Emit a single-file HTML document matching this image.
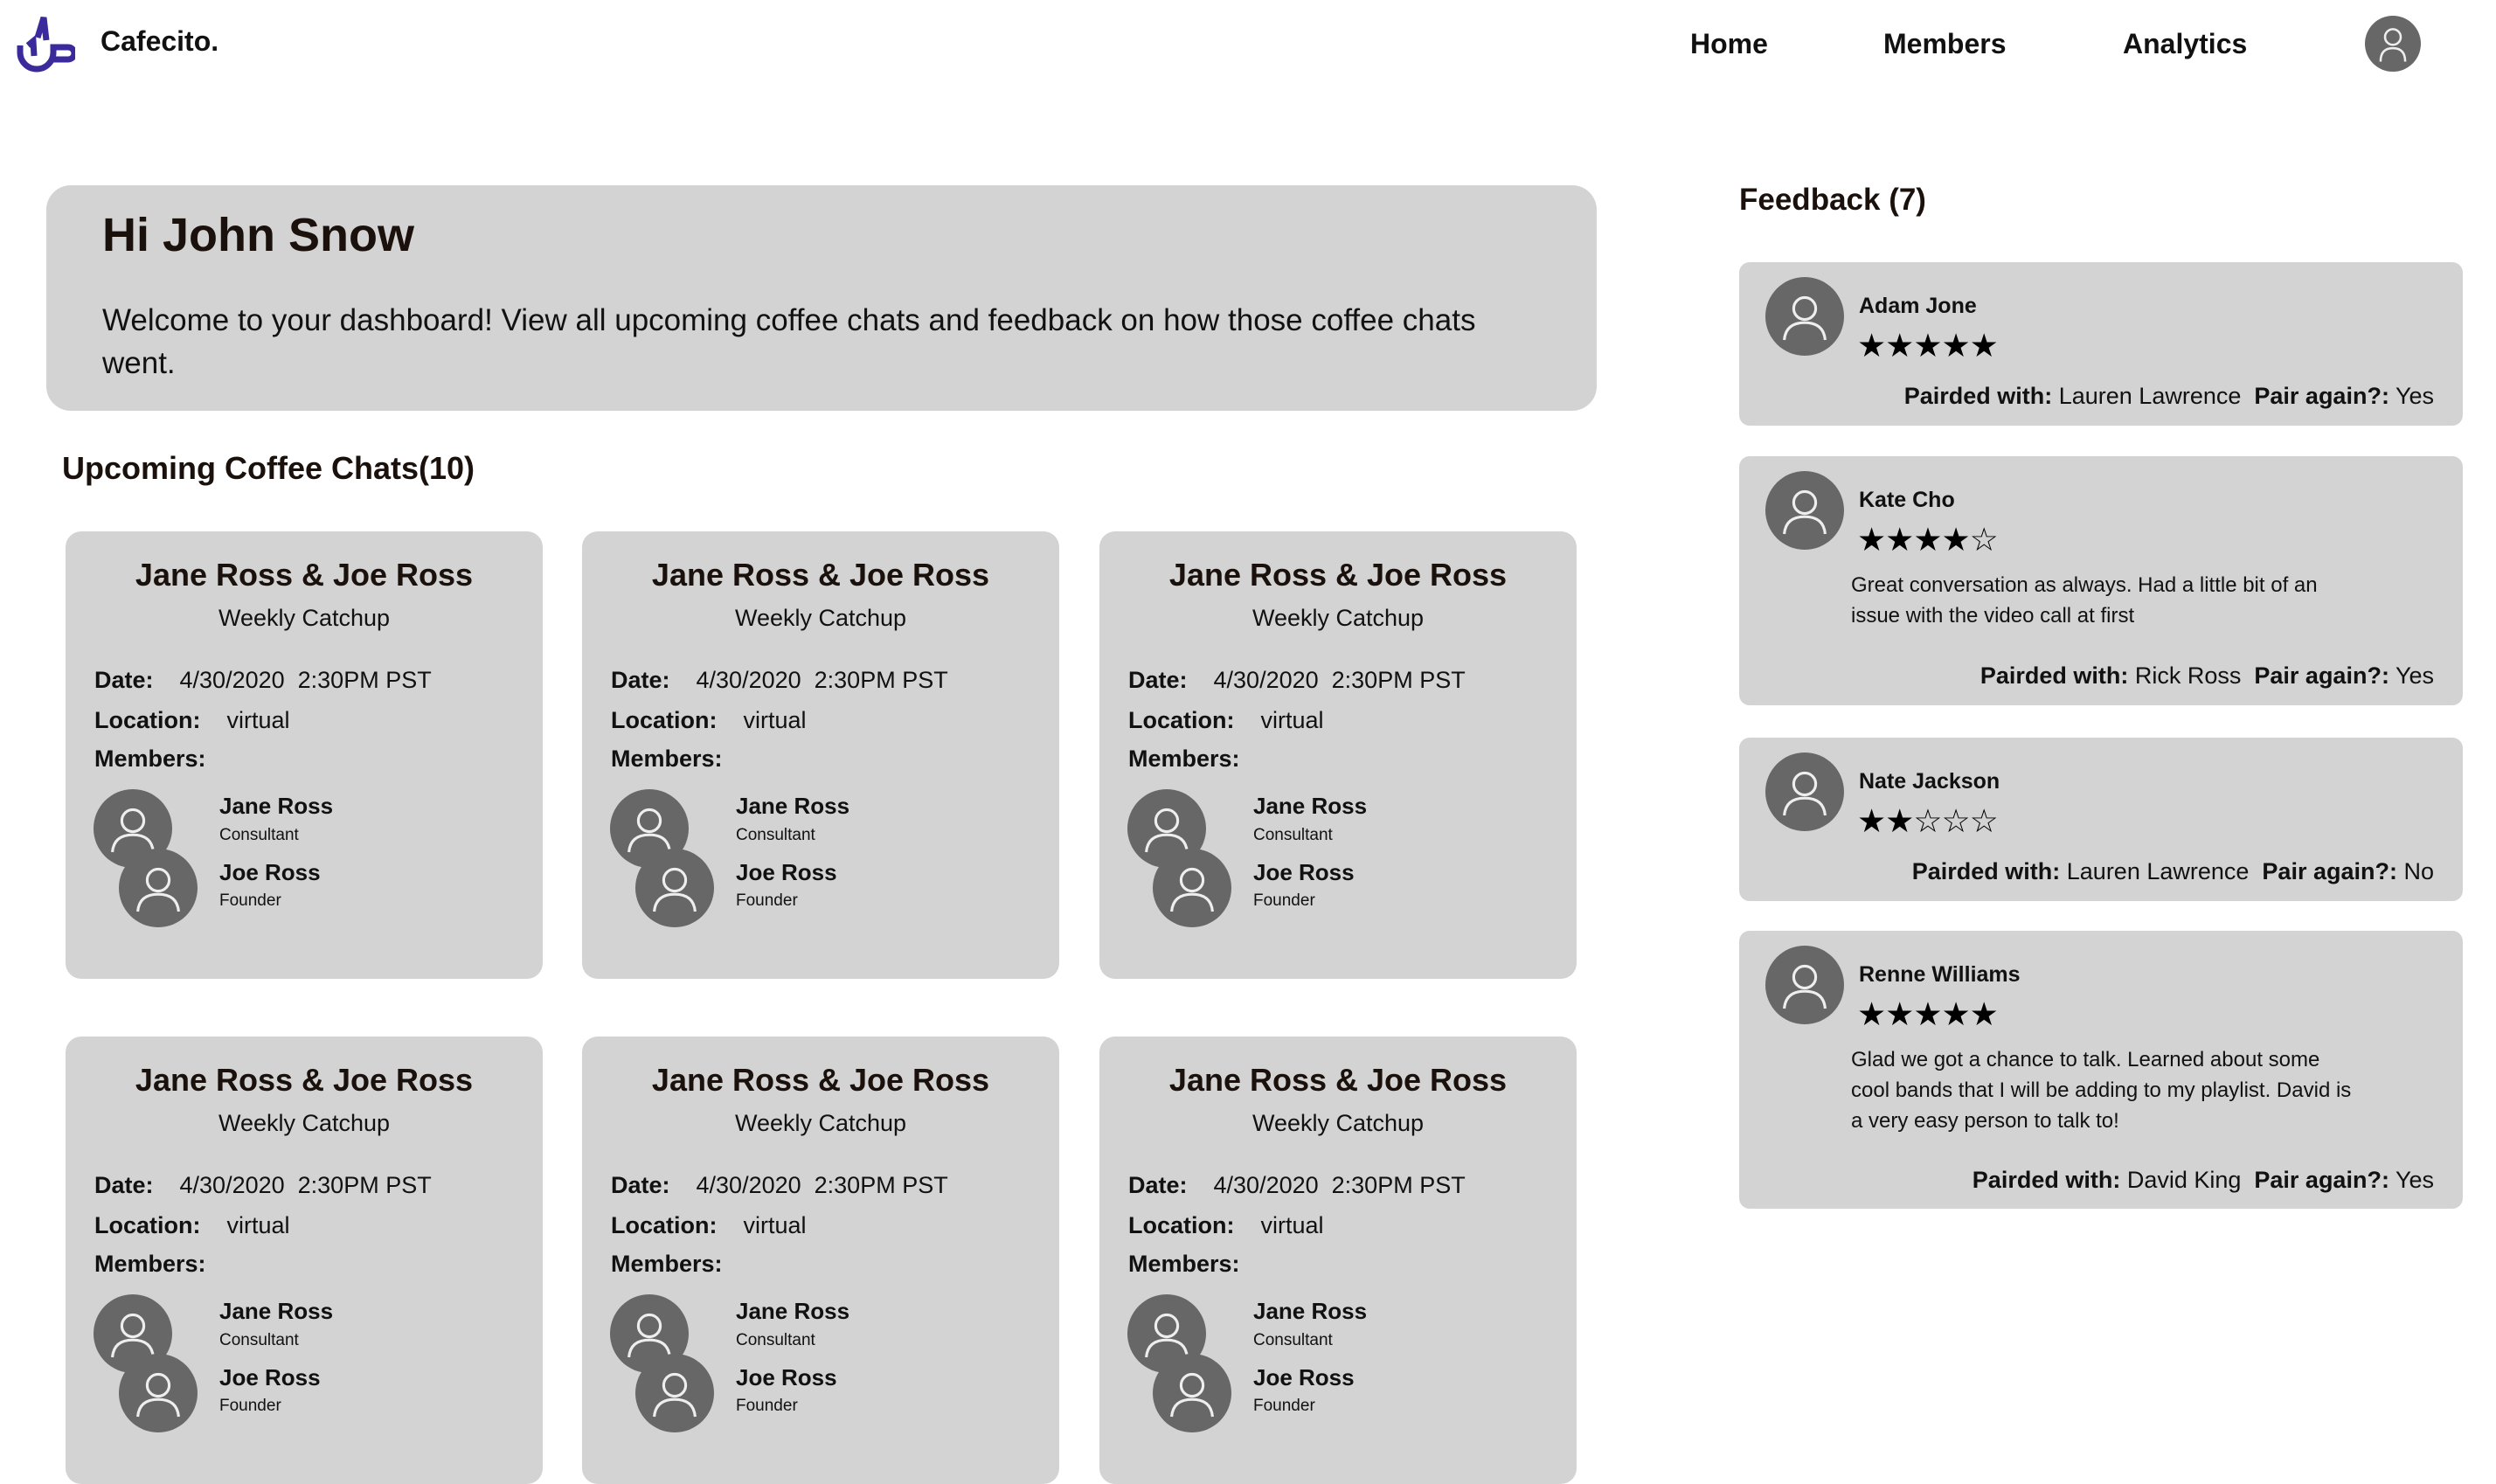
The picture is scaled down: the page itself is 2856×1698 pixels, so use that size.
<!DOCTYPE html>
<html><head><meta charset="utf-8"><style>
*{margin:0;padding:0;box-sizing:border-box}
html,body{width:2856px;height:1412px;overflow:hidden;background:#fff;font-family:"Liberation Sans",sans-serif;color:#111}
.a{position:absolute;white-space:nowrap}
.h{font-family:"Liberation Sans",sans-serif;font-weight:bold;color:#1a100c}
.card{position:absolute;background:#d3d3d3;border-radius:18px;width:546px;height:512px}
.card .t{position:absolute;left:0;width:100%;text-align:center}
.lbl{font-weight:bold}
.fb{position:absolute;left:1990px;width:828px;background:#d3d3d3;border-radius:12px}
.av{position:absolute}
.star{font-family:"DejaVu Sans",sans-serif;font-size:37px;letter-spacing:-1px;color:#000}
</style></head><body>
<svg class="a" style="left:16px;top:16px" width="70" height="70" viewBox="0 0 70 70">
<g fill="none" stroke="#3a2a9c" stroke-width="7" stroke-linejoin="miter">
<path d="M7 36 V44 A19 19 0 0 0 45 44 V38 H62 A7 7 0 0 1 62 52 H44"/>
<path d="M16 36 L22 31 L23 48"/>
<path d="M27 27 L34 4 L37 30"/>
</g></svg>
<div class="a" style="left:115px;top:29px;font-size:32px;font-weight:bold">Cafecito.</div>
<div class="a" style="left:1934px;top:32px;font-size:32px;font-weight:bold">Home</div>
<div class="a" style="left:2155px;top:32px;font-size:32px;font-weight:bold">Members</div>
<div class="a" style="left:2429px;top:32px;font-size:32px;font-weight:bold">Analytics</div>
<svg class="a" style="left:2706px;top:18px" width="64" height="64" viewBox="0 0 100 100"><circle cx="50" cy="50" r="50" fill="#676767"/><circle cx="50" cy="38" r="14" fill="none" stroke="#eee" stroke-width="4"/><path d="M28 82 Q28 58 50 58 Q72 58 72 82" fill="none" stroke="#eee" stroke-width="4"/></svg>

<div class="a" style="left:53px;top:212px;width:1774px;height:258px;background:#d3d3d3;border-radius:28px"></div>
<div class="a h" style="left:117px;top:238px;font-size:54px">Hi John Snow</div>
<div class="a" style="left:117px;top:342px;width:1640px;white-space:normal;font-size:35px;line-height:49px;color:#111">Welcome to your dashboard! View all upcoming coffee chats and feedback on how those coffee chats went.</div>
<div class="a h" style="left:71px;top:515px;font-size:36px">Upcoming Coffee Chats(10)</div>

<div class="a h" style="left:1990px;top:209px;font-size:35px">Feedback (7)</div>

<div id="cards"></div>
<div id="fbs"></div>

<script>
var av='<svg width="90" height="90" viewBox="0 0 100 100"><circle cx="50" cy="50" r="50" fill="#676767"/><circle cx="50" cy="40" r="14" fill="none" stroke="#eee" stroke-width="3.5"/><path d="M24 80 Q26 58 50 58 Q74 58 76 80" fill="none" stroke="#eee" stroke-width="3.5"/></svg>';
var xs=[75,666,1258],ys=[608,1186],h='';
ys.forEach(function(y){xs.forEach(function(x){
h+='<div class="card" style="left:'+x+'px;top:'+y+'px">'+
'<div class="t h" style="top:28px;font-size:36px;line-height:44px">Jane Ross &amp; Joe Ross</div>'+
'<div class="t" style="top:84px;font-size:27px;line-height:30px">Weekly Catchup</div>'+
'<div class="a" style="left:33px;top:155px;font-size:27px;line-height:30px"><span class="lbl">Date:</span>&nbsp;&nbsp;&nbsp;&nbsp;4/30/2020&nbsp;&nbsp;2:30PM PST</div>'+
'<div class="a" style="left:33px;top:201px;font-size:27px;line-height:30px"><span class="lbl">Location:</span>&nbsp;&nbsp;&nbsp;&nbsp;virtual</div>'+
'<div class="a" style="left:33px;top:245px;font-size:27px;line-height:30px"><span class="lbl">Members:</span></div>'+
'<div class="av" style="left:32px;top:295px">'+av+'</div>'+
'<div class="av" style="left:61px;top:363px">'+av+'</div>'+
'<div class="a lbl" style="left:176px;top:300px;font-size:26px;line-height:28px">Jane Ross</div>'+
'<div class="a" style="left:176px;top:337px;font-size:19px;line-height:22px">Consultant</div>'+
'<div class="a lbl" style="left:176px;top:376px;font-size:26px;line-height:28px">Joe Ross</div>'+
'<div class="a" style="left:176px;top:412px;font-size:19px;line-height:22px">Founder</div>'+
'</div>';});});
document.getElementById('cards').innerHTML=h;
var fb=[
{t:300,hh:187,n:'Adam Jone',s:'★★★★★',txt:[],p:'Lauren Lawrence',a:'Yes',py:138},
{t:522,hh:285,n:'Kate Cho',s:'★★★★☆',txt:['Great conversation as always. Had a little bit of an','issue with the video call at first'],p:'Rick Ross',a:'Yes',py:236},
{t:844,hh:187,n:'Nate Jackson',s:'★★☆☆☆',txt:[],p:'Lauren Lawrence',a:'No',py:138},
{t:1065,hh:318,n:'Renne Williams',s:'★★★★★',txt:['Glad we got a chance to talk. Learned about some','cool bands that I will be adding to my playlist. David is','a very easy person to talk to!'],p:'David King',a:'Yes',py:270}];
var g='';
fb.forEach(function(f){
g+='<div class="fb" style="top:'+f.t+'px;height:'+f.hh+'px">'+
'<div class="av" style="left:30px;top:17px">'+av+'</div>'+
'<div class="a lbl" style="left:137px;top:36px;font-size:25px;line-height:28px">'+f.n+'</div>'+
'<div class="a star" style="left:135px;top:74px;line-height:44px">'+f.s+'</div>';
f.txt.forEach(function(l,i){g+='<div class="a" style="left:128px;top:'+(133+i*35)+'px;font-size:24px;line-height:30px">'+l+'</div>';});
g+='<div class="a" style="right:33px;top:'+f.py+'px;font-size:27px;line-height:30px"><span class="lbl">Pairded with:</span> '+f.p+'&nbsp;&nbsp;<span class="lbl">Pair again?:</span> '+f.a+'</div></div>';});
document.getElementById('fbs').innerHTML=g;
</script>
</body></html>
